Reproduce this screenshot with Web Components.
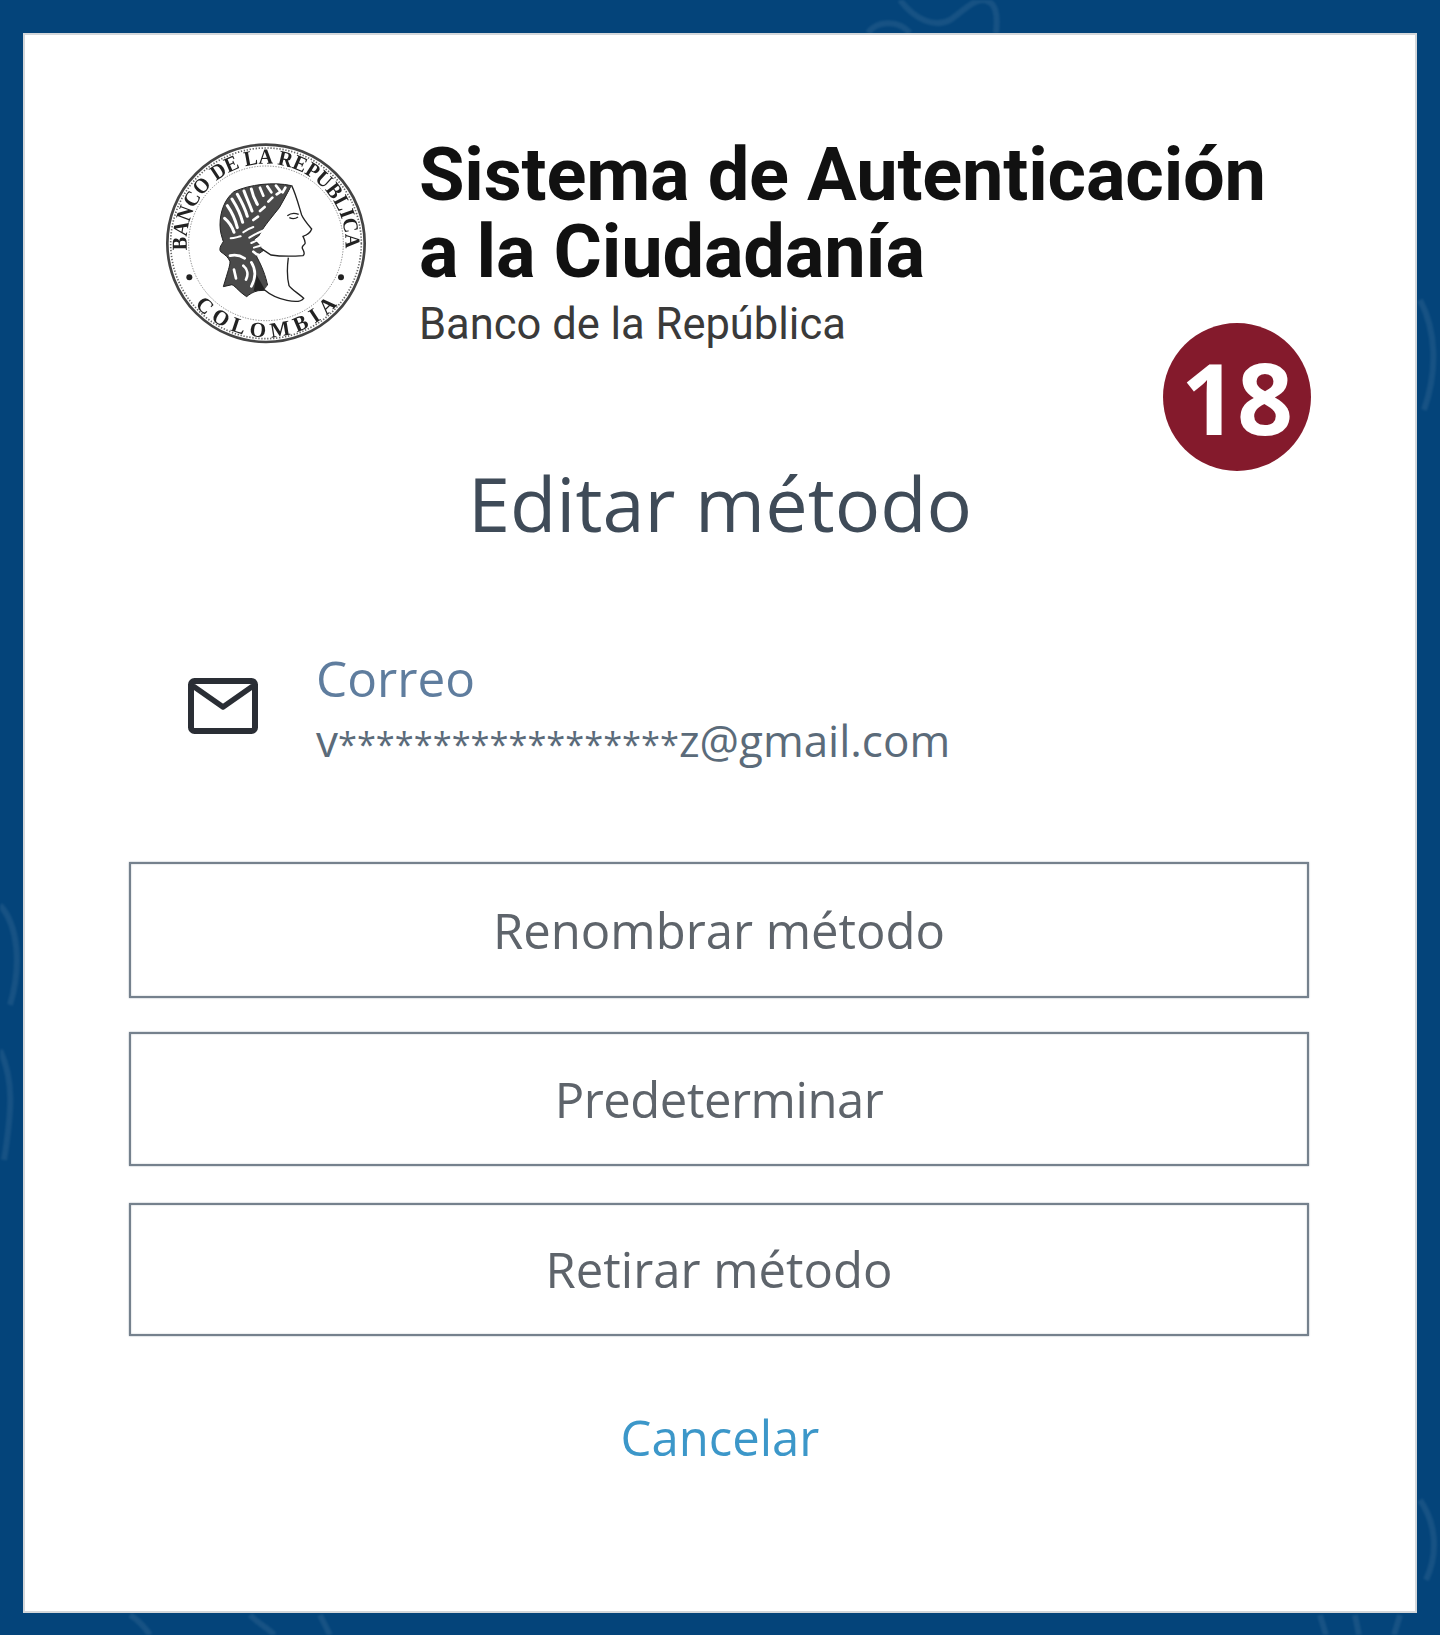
<!DOCTYPE html>
<html lang="es"><head><meta charset="utf-8"><title>Editar método</title>
<style>html,body{margin:0;padding:0;background:#04447a}</style></head>
<body>
<auth-page>
  <seal-header title-one="Sistema de Autenticación" title-two="a la Ciudadanía" sub="Banco de la República"></seal-header>
  <step-badge>18</step-badge>
  <h-title>Editar método</h-title>
  <method-row label="Correo" first="v" stars="******************" last="z@gmail.com"></method-row>
  <action-list>
    <action-button h="136">Renombrar método</action-button>
    <action-button h="134" gap="34" ls="-.45">Predeterminar</action-button>
    <action-button h="133" gap="37">Retirar método</action-button>
  </action-list>
  <cancel-link>Cancelar</cancel-link>
</auth-page>
<script>
const def=(n,html)=>customElements.define(n,class extends HTMLElement{connectedCallback(){if(this.shadowRoot)return;const r=this.attachShadow({mode:'open'});r.innerHTML=typeof html==='function'?html(this):html;}});
def('auth-page',`<style>
:host{display:block;position:relative;width:1440px;height:1635px;box-sizing:border-box;padding:33px 23px 22px;background:#04447a;overflow:hidden}
.bg{position:absolute;inset:0;width:1440px;height:1635px;filter:blur(1px)}
.card{position:relative;box-sizing:border-box;height:1580px;background:#fff;box-shadow:inset 0 0 0 2px #d4d7da;padding-top:105px}
</style>
<svg class="bg" viewBox="0 0 1440 1635" fill="none" stroke="#fff" stroke-opacity=".08" stroke-width="6" aria-hidden="true">
<path d="M900 0c15 20 35 28 50 20 12-8 22-20 34-20 12 2 14 14 12 33"/><path d="M868 33c8-12 30-14 42 0"/>
<path d="M0 905c18 20 22 60 10 100M0 1050c14 30 12 60 4 110"/>
<path d="M1420 300c16 30 18 70 4 110M1420 1500c14 20 20 50 6 80"/>
<path d="M1320 1615l6 20M1355 1615l4 20M1400 1615l-6 20M130 1615c10 6 16 14 20 20M250 1615c10 10 20 14 24 20M320 1615l10 20"/>
</svg>
<div class="card"><slot></slot></div>`);
def('seal-header',h=>`<style>
:host{display:flex;margin-left:117px;height:222px;align-items:flex-start}
svg{flex:none;width:260px;height:240px;margin-top:-18px;filter:blur(.6px)}
.t{margin-left:19px;margin-top:-2px;font-family:Roboto,"Liberation Sans",sans-serif}
h1{margin:0;font-weight:700;font-size:74px;color:#111;letter-spacing:-.2px}
h1 span{display:block;height:77px;line-height:77px;white-space:nowrap}
p{margin:10px 0 0;font-size:43.5px;line-height:50px;color:#3a3a3a}
</style>
<svg viewBox="0 0 780 720" fill="none" stroke="#222" aria-hidden="true">
<defs><path id="a" d="M141 391A238 238 0 1 1 615 391"/><path id="b" d="M164.6 554.3A282 282 0 0 0 591.4 554.3"/></defs>
<circle cx="378" cy="370" r="296" stroke="#444" stroke-width="8"/><circle cx="378" cy="370" r="286" stroke-width="5" stroke-dasharray="4 5" stroke-opacity=".7"/>
<circle cx="378" cy="370" r="232" stroke-width="3" stroke-dasharray="4 4" stroke-opacity=".5"/>
<g font-family="Liberation Serif,serif" font-weight="700" font-size="64" fill="#222" stroke="none">
<text><textPath href="#a" textLength="785" lengthAdjust="spacingAndGlyphs">BANCO DE LA REPUBLICA</textPath></text>
<text><textPath href="#b" textLength="484" lengthAdjust="spacing">COLOMBIA</textPath></text></g>
<circle cx="148" cy="472" r="9" fill="#222" stroke="none"/><circle cx="603" cy="472" r="9" fill="#222" stroke="none"/>
<g transform="translate(210 165)">
<path d="M245 32C190 20 120 28 72 50 44 72 30 110 30 150c0 22 6 36 10 50-8 12-14 22-8 30 14 10 24 18 28 30 0 12-6 28-20 75l26-6c12 6 22 22 44 36 14-12 26-16 36-18l30-2c-6-30-14-60-36-100 4-8 14-14 22-20-10-10-20-22-30-32l14-10 12-20c10-16 34-45 50-65z" fill="#4a4a4a" stroke="#222" stroke-width="3"/>
<g stroke="#fff" stroke-linecap="round">
<path d="M52 92c14 20 24 42 30 66M66 72c14 22 26 46 32 70M82 58c14 24 24 46 30 66M102 48c8 22 16 38 24 60M124 42c4 18 10 32 18 46M44 130c12 10 22 24 28 42" stroke-width="9"/>
<path d="M150 38l10 24M172 34l12 18M198 32l14 18M226 38l-8 14M175 80l12-12M150 108l14-12M130 135l14-10M200 58l12-8" stroke-width="8"/>
<path d="M118 188c20-12 40-22 62-28M124 204c16-8 34-14 54-14M100 172c10-8 18-12 30-16M62 190c10 0 20-4 30-6M132 218c12-4 22-8 34-8" stroke-width="6"/>
<path d="M100 272c12 10 16 26 8 42M124 262c14 22 14 46 0 72M72 284l6 26M60 242c16-4 32 0 44 8M130 230c8 8 14 12 22 10" stroke-width="8"/>
</g>
<path d="M245 32c12 24 22 62 30 88 6 14 18 28 30 42-4 12-14 18-26 22 4 8 8 16 6 22-4 6-10 6-8 14 6 10 8 18 2 22-30 2-70 2-96-2l-30-20M235 248c-4 30-4 60 2 84 10 14 30 24 44 38-6 8-24 12-50 6-28-6-52-18-68-32" fill="#fff" stroke-width="4"/>
<path d="M232 122c10-8 24-8 34-4M238 128c8 4 18 4 26-2" stroke-width="4"/>
<path d="M140 300l25 44-34 4z" fill="#222" stroke="none"/>
</g>
</svg>
<div class="t"><h1><span>${h.getAttribute('title-one')}</span><span>${h.getAttribute('title-two')}</span></h1><p>${h.getAttribute('sub')}</p></div>`);
def('step-badge',`<style>
:host{position:absolute;left:1140px;top:290px;width:148px;height:148px;border-radius:50%;background:#841a2c;color:#fff;display:flex;align-items:center;justify-content:center;font:700 98px/1 "Open Sans",sans-serif}
</style><slot></slot>`);
def('h-title',`<style>
:host{display:block;text-align:center;font:400 75.7px/100px "Open Sans",sans-serif;color:#3f4b58;height:201px;padding-top:93px}
</style><slot></slot>`);
def('method-row',h=>`<style>
:host{display:flex;margin-left:165px;height:208px;font-family:"Open Sans",sans-serif}
svg{flex:none;width:70px;height:56px;margin-top:24px}
.x{margin-left:58px;margin-top:-10px}
.l{font-size:49.5px;line-height:68px;color:#5f7d9e}
.v{font-size:44px;line-height:56px;color:#5b6b7a}
.s{font-size:34.4px}
</style>
<svg viewBox="0 0 70 56" fill="none" stroke="#2a2e35" stroke-width="6" stroke-linejoin="round"><rect x="3" y="3" width="64" height="50" rx="3.5"/><path d="M5 8l30 21 30-21" stroke-width="5.5"/></svg>
<div class="x"><div class="l">${h.getAttribute('label')}</div><div class="v">${h.getAttribute('first')}<span class="s">${h.getAttribute('stars')}</span>${h.getAttribute('last')}</div></div>`);
def('action-list',`<style>
:host{display:flex;flex-direction:column;margin:0 108px 0 106px}
</style><slot></slot>`);
def('action-button',h=>`<style>
:host{display:flex;box-sizing:border-box;height:${h.getAttribute('h')}px;margin-top:${h.getAttribute('gap')||0}px;border:2px solid #75818d;box-shadow:0 0 1.5px #9aa4ae,inset 0 0 1.5px #9aa4ae;align-items:center;justify-content:center;font:400 49px/1 "Open Sans",sans-serif;letter-spacing:${h.getAttribute('ls')||0}px;color:#5e646b;background:#fff}
</style><slot></slot>`);
def('cancel-link',`<style>
:host{display:block;text-align:center;margin-top:67px;font:400 49px/68px "Open Sans",sans-serif;color:#3c97c9}
</style><slot></slot>`);
</script>
</body></html>
